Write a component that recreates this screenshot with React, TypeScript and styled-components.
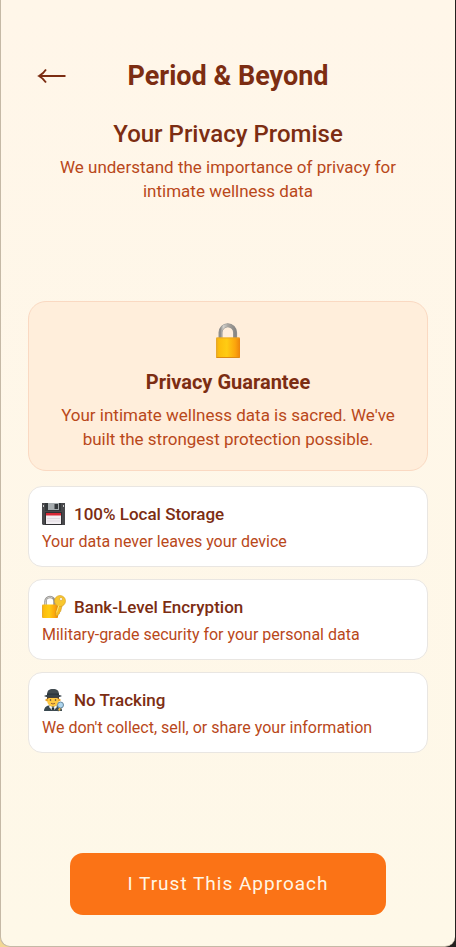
import React from "react";
import styled, { createGlobalStyle } from "styled-components";

const GlobalStyle = createGlobalStyle`
  *, *::before, *::after { box-sizing: border-box; }
  body { margin: 0; background: #24211f; font-family: Roboto, sans-serif; }
  h1, h2, h3, p, ul { margin: 0; padding: 0; }
`;

const Backdrop = styled.div`
  min-height: 100vh;
  display: flex;
  background: linear-gradient(90deg, #f3d894 0 20px, #b9ad96 20px calc(100% - 20px), #24211f calc(100% - 20px));
`;

const Screen = styled.main`
  flex: 1;
  display: flex;
  flex-direction: column;
  margin-right: 1px;
  padding: 55px 27px 31px;
  border: solid #c5b9a6;
  border-width: 0 0 1px 1px;
  border-radius: 0 0 10px 10px;
  background: linear-gradient(#fff6e9, #fef8e8);
  color: #7c2d12;
`;

const Header = styled.header`
  display: grid;
  grid-template-columns: 48px 1fr 48px;
  align-items: center;
  height: 40px;
`;

const BackButton = styled.button`
  display: flex;
  align-items: center;
  justify-content: center;
  height: 40px;
  padding: 0;
  border: 0;
  background: none;
  color: inherit;
  cursor: pointer;
`;

const Title = styled.h1`
  text-align: center;
  font-size: 27px;
  line-height: 42px;
  font-weight: 700;
`;

const Intro = styled.section`
  margin-top: 21px;
  text-align: center;
`;

const Subtitle = styled.h2`
  margin-bottom: 3px;
  font-size: 24px;
  line-height: 36px;
  font-weight: 500;
`;

const Body = styled.p`
  max-width: 360px;
  margin: 0 auto;
  font-size: 17px;
  line-height: 24px;
  color: #b9481a;
`;

const Content = styled.div`
  flex: 1;
  display: flex;
  flex-direction: column;
  justify-content: center;
  padding-bottom: 2px;
`;

const Guarantee = styled.section`
  display: flex;
  flex-direction: column;
  align-items: center;
  padding: 21px 20px 19px;
  border: 1px solid #fad9c2;
  border-radius: 18px;
  background: #ffeedb;
  text-align: center;
`;

const GuaranteeTitle = styled.h3`
  margin: 9px 0 7px;
  font-size: 20px;
  line-height: 28px;
  font-weight: 700;
`;

const Features = styled.ul`
  display: flex;
  flex-direction: column;
  gap: 12px;
  margin-top: 15px;
  list-style: none;
`;

const Feature = styled.li`
  padding: 13px 13px 10px;
  border: 1px solid #e9e6e2;
  border-radius: 14px;
  background: #fff;
`;

const FeatureHead = styled.div`
  display: flex;
  align-items: center;
  gap: 8px;
`;

const FeatureTitle = styled.h3`
  font-size: 17px;
  line-height: 28px;
  font-weight: 500;
`;

const FeatureText = styled.p`
  font-size: 16px;
  line-height: 28px;
  color: #b9481a;
`;

const Action = styled.button`
  align-self: center;
  width: 79%;
  height: 62px;
  border: 0;
  border-radius: 13px;
  background: #fb7316;
  color: #fff6e5;
  font-family: inherit;
  font-size: 19px;
  line-height: 28px;
  letter-spacing: 1px;
  cursor: pointer;
`;

const LockIcon = () => (
  <svg width="26" height="36" viewBox="0 0 26 36" aria-hidden="true">
    <defs>
      <linearGradient id="brass">
        <stop offset="0" stopColor="#e5a52b" />
        <stop offset=".12" stopColor="#fdbd0c" />
        <stop offset=".45" stopColor="#ffcc13" />
        <stop offset=".8" stopColor="#fca50c" />
        <stop offset="1" stopColor="#ec840b" />
      </linearGradient>
      <linearGradient id="steel">
        <stop offset="0" stopColor="#8e8e8c" />
        <stop offset=".2" stopColor="#d3d1cc" />
        <stop offset=".5" stopColor="#aaa7a2" />
        <stop offset="1" stopColor="#898784" />
      </linearGradient>
    </defs>
    <path d="M5.500 16V9.500a7.300 7.300 0 0 1 14.600 0V16" fill="none" stroke="#959390" strokeWidth="4" />
    <path d="M5.500 16V9.500a7.300 7.300 0 0 1 14.600 0V16" fill="none" stroke="url(#steel)" strokeWidth="3" />
    <rect x="1" y="14.500" width="24" height="20.500" rx="1" fill="url(#brass)" />
    <path d="M1.500 34.500h23" stroke="#dd8a13" />
    <path d="M1.500 15h23" stroke="#e8a52c" strokeWidth=".8" />
  </svg>
);

const FloppyIcon = () => (
  <svg width="24" height="24" viewBox="0 0 24 24" aria-hidden="true">
    <path d="M0 1h23v22H1l-1-1Z" fill="#48484b" />
    <path d="M3 1h16v8H3Z" fill="#33373a" />
    <path d="M6 1h11v7H6Z" fill="#a6acaf" />
    <path d="M12.500 2H16v5h-3.500Z" fill="#34383b" />
    <path d="M3 10h17v13H3Z" fill="#303033" />
    <path d="M4 11h15v3H4Z" fill="#d92836" />
    <path d="M4 13.500h15V22H4Z" fill="#f2eef2" />
    <path d="M5 16.500h13M5 19h13" stroke="#d4cbd4" strokeWidth=".6" />
    <path d="M1 3h1v2H1ZM21 3h1v2h-1Z" fill="#c7c9ca" />
  </svg>
);

const LockKeyIcon = () => (
  <svg width="24" height="24" viewBox="0 0 24 24" aria-hidden="true">
    <path d="M3.500 11V6.500a4.500 4.500 0 0 1 9 0V11" fill="none" stroke="#949390" strokeWidth="2.500" />
    <path d="M3.500 10V6.500a4.500 4.500 0 0 1 7-3.700" fill="none" stroke="#d1ceca" />
    <rect y="9.500" width="16" height="13.500" rx="1" fill="url(#brass)" />
    <path d="m16 10-2.800 9 .8 2 2-.3.4-1.600 1-.3.2-1.800 1-.4L20 11Z" fill="#f7bd22" stroke="#c99320" strokeWidth=".6" />
    <path fillRule="evenodd" d="M18 .5a5.300 5.300 0 1 0 0 11 5.300 5.300 0 0 0 0-11Zm1 2a1.500 1.500 0 1 1 0 3 1.500 1.500 0 0 1 0-3Z" fill="#f8c72f" stroke="#d59c21" strokeWidth=".6" />
    <path d="m16.800 10.500-2.200 7" stroke="#ffe173" />
  </svg>
);

const DetectiveIcon = () => (
  <svg width="24" height="24" viewBox="0 0 24 24" aria-hidden="true">
    <path d="M2 23c0-4 3-6 9-6s9 2 9 6Z" fill="#394850" />
    <path d="m8 17 3 2.500 3-2.500 1 2-4 4-4-4Z" fill="#f1f4f5" />
    <path d="m11 19-1.300 1 .7 3h1.200l.7-3Z" fill="#242d33" />
    <path d="M5 8h12v4c0 3.800-2.500 6.500-6 6.500S5 15.800 5 12Z" fill="#ffc943" />
    <circle cx="4.700" cy="12" r="1.300" fill="#e6a32c" />
    <circle cx="17.300" cy="12" r="1.300" fill="#e6a32c" />
    <path d="M5 8h12v3l-2-1H7l-2 1Z" fill="#573e2c" />
    <circle cx="8.500" cy="12" r=".8" fill="#4b3a31" />
    <circle cx="13.500" cy="12" r=".8" fill="#4b3a31" />
    <path d="M9 15.300q2 1.400 4 0" fill="none" stroke="#97592e" strokeWidth=".9" />
    <path d="M5 7c0-4.500 2-6 6-6s6 1.500 6 6Z" fill="#414b50" />
    <path d="M5 5.600h12v1.800H5Z" fill="#252f34" />
    <path d="M2 8C4 6.700 7 6.500 11 6.500s7 .2 9 1.500c-2 1.500-5 1.500-9 1.500S4 9.500 2 8Z" fill="#38434a" />
    <path d="m18 19-2.500 4" stroke="#46545b" strokeWidth="1.800" />
    <circle cx="18.500" cy="17" r="3" fill="#add5ee" stroke="#66889e" />
    <path d="m16 22 1.200-2.200 1.500.6-.7 2.600Z" fill="#f1b638" />
  </svg>
);

const features = [
  { Icon: FloppyIcon, title: "100% Local Storage", text: "Your data never leaves your device" },
  { Icon: LockKeyIcon, title: "Bank-Level Encryption", text: "Military-grade security for your personal data" },
  { Icon: DetectiveIcon, title: "No Tracking", text: "We don't collect, sell, or share your information" },
];

export default function App() {
  return (
    <>
      <GlobalStyle />
      <Backdrop>
        <Screen>
          <Header>
            <BackButton type="button" aria-label="Back">
              <svg width="30" height="16" viewBox="0 0 30 16" fill="none" stroke="currentColor" strokeWidth="1.800" aria-hidden="true">
                <path d="M28.500 8H2M9 1.500Q6.500 5.500 2 8q4.500 2.500 7 6.500" />
              </svg>
            </BackButton>
            <Title>Period &amp; Beyond</Title>
          </Header>
          <Intro>
            <Subtitle>Your Privacy Promise</Subtitle>
            <Body>We understand the importance of privacy for intimate wellness data</Body>
          </Intro>
          <Content>
            <Guarantee>
              <LockIcon />
              <GuaranteeTitle>Privacy Guarantee</GuaranteeTitle>
              <Body>Your intimate wellness data is sacred. We've built the strongest protection possible.</Body>
            </Guarantee>
            <Features>
              {features.map(({ Icon, title, text }) => (
                <Feature key={title}>
                  <FeatureHead>
                    <Icon />
                    <FeatureTitle>{title}</FeatureTitle>
                  </FeatureHead>
                  <FeatureText>{text}</FeatureText>
                </Feature>
              ))}
            </Features>
          </Content>
          <Action type="button">I Trust This Approach</Action>
        </Screen>
      </Backdrop>
    </>
  );
}
